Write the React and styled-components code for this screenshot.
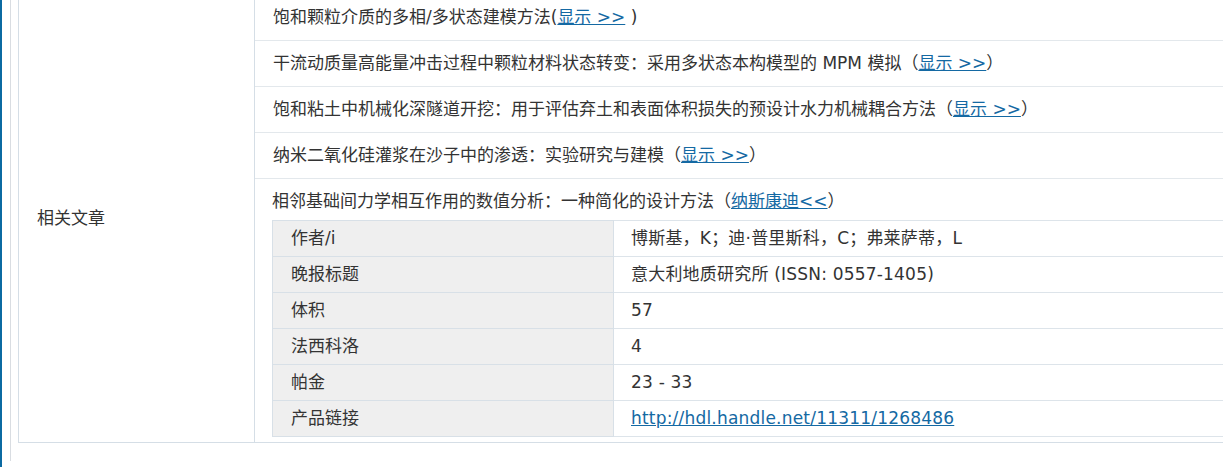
import React from 'react'
import styled, { createGlobalStyle } from "styled-components";

const GlobalStyle = createGlobalStyle`
  html, body {
    margin: 0;
    padding: 0;
    background: #ffffff;
    overflow: hidden;
  }
  body {
    font-family: "DejaVu Sans", "Noto Sans CJK SC", sans-serif;
    font-size: 17px;
    color: #333333;
  }
`;

const articles = [
  { title: "饱和颗粒介质的多相/多状态建模方法", open: "(", close: " )", link: "显示 >>" },
  { title: "干流动质量高能量冲击过程中颗粒材料状态转变：采用多状态本构模型的 MPM 模拟", open: "（", close: "）", link: "显示 >>" },
  { title: "饱和粘土中机械化深隧道开挖：用于评估弃土和表面体积损失的预设计水力机械耦合方法", open: "（", close: "）", link: "显示 >>" },
  { title: "纳米二氧化硅灌浆在沙子中的渗透：实验研究与建模", open: "（", close: "）", link: "显示 >>" },
]

const details = [
  { label: "作者/i", value: "博斯基，K；迪·普里斯科，C；弗莱萨蒂，L" },
  { label: "晚报标题", value: "意大利地质研究所 (ISSN: 0557-1405)" },
  { label: "体积", value: "57" },
  { label: "法西科洛", value: "4" },
  { label: "帕金", value: "23 - 33" },
  { label: "产品链接", value: "http://hdl.handle.net/11311/1268486", href: true },
]

const App = () => {
  return (
    <Page>
      <GlobalStyle />
      <Rail>
        <OuterTable>
          <tbody>
            <tr>
              <SideCell>相关文章</SideCell>
              <MainCell>
                {articles.map((a) => (
                  <ArticleRow key={a.title}>
                    {a.title}{a.open}<Link href="#">{a.link}</Link>{a.close}
                  </ArticleRow>
                ))}
                <ArticleRow last>
                  相邻基础间力学相互作用的数值分析：一种简化的设计方法（<Link href="#">纳斯康迪&lt;&lt;</Link>）
                  <DetailTable>
                    <tbody>
                      {details.map((d) => (
                        <tr key={d.label}>
                          <Label>{d.label}</Label>
                          <Value>
                            {d.href ? <Link href="#">{d.value}</Link> : d.value}
                          </Value>
                        </tr>
                      ))}
                    </tbody>
                  </DetailTable>
                </ArticleRow>
              </MainCell>
            </tr>
          </tbody>
        </OuterTable>
      </Rail>
    </Page>
  )
}

const Page = styled.div`
  border-left: 2px solid #0b6aa2;
  padding-left: 8px;
  height: 100vh;
  overflow: hidden;
  box-sizing: border-box;
`;

const Rail = styled.div`
  border-left: 1px solid #d9dde2;
  padding-left: 7px;
  min-height: 100vh;
  margin-top: -6px;
  width: 1420px;
`;

const OuterTable = styled.table`
  border-collapse: collapse;
  table-layout: fixed;
  width: 1420px;
  border: 1px solid #d5dee6;
`;

const SideCell = styled.td`
  width: 217px;
  padding: 0 0 0 18px;
  vertical-align: middle;
  border-right: 1px solid #d5dee6;
  line-height: 21px;
`;

const MainCell = styled.td`
  padding: 0;
  vertical-align: top;
`;

const ArticleRow = styled.div`
  padding: ${(p) => (p.last ? "12px 0 5px 17px" : "12px 0 12px 18px")};
  line-height: 21px;
  border-bottom: ${(p) => (p.last ? "none" : "1px solid #e3e8ec")};
  white-space: nowrap;
`;

const Link = styled.a`
  color: #1469a3;
  text-decoration: underline;
`;

const DetailTable = styled.table`
  border-collapse: collapse;
  margin-top: 8px;
  width: 1100px;
  border: 1px solid #d8e0e7;
`;

const Label = styled.td`
  width: 322px;
  height: 35px;
  padding: 0 0 0 18px;
  background: #efefef;
  border: 1px solid #d8e0e7;
  line-height: 21px;
`;

const Value = styled.td`
  padding: 0 0 0 17px;
  height: 35px;
  border: 1px solid #dde4ea;
  line-height: 21px;
  letter-spacing: 0.2px;
`;

export default App
